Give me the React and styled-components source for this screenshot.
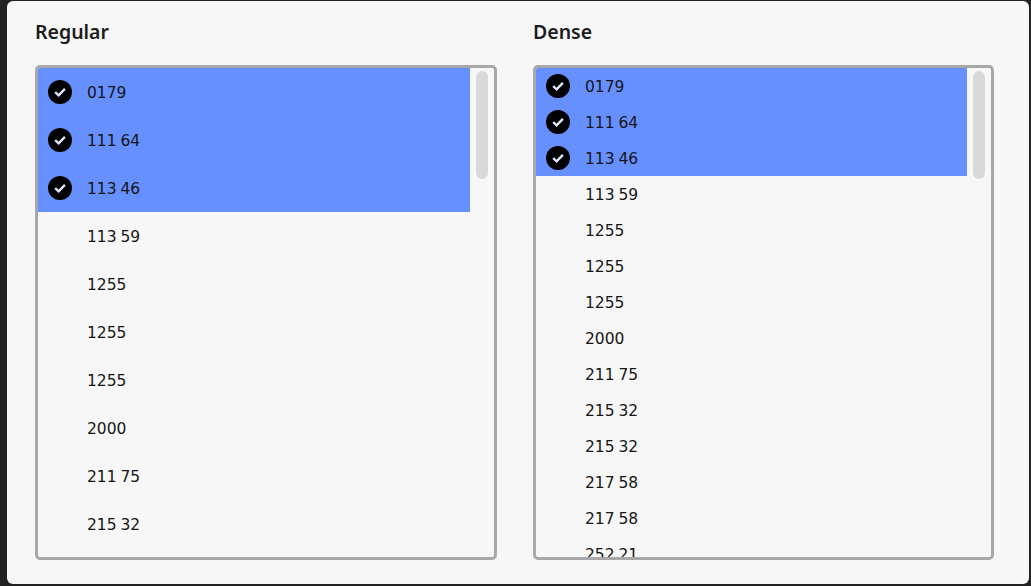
import styled, { createGlobalStyle } from "styled-components"

const GlobalStyle = createGlobalStyle`
  html, body {
    margin: 0;
    height: 100%;
    background: #222222;
    overflow: hidden;
  }
`

const regularItems = ["0179", "111 64", "113 46", "113 59", "1255", "1255", "1255", "2000", "211 75", "215 32"]
const denseItems = ["0179", "111 64", "113 46", "113 59", "1255", "1255", "1255", "2000", "211 75", "215 32", "215 32", "217 58", "217 58", "252 21"]

const CheckBadge = () => (
  <svg width="24" height="24" viewBox="0 0 24 24" aria-hidden="true">
    <circle cx="12" cy="12" r="12" fill="#000" />
    <path d="M7.2 12.2l3.4 3.2 6.3-6.5" fill="none" stroke="#dfe7ff" strokeWidth="2.4" />
  </svg>
)

const SelectList = ({ title, items, rowHeight }) => (
  <Column>
    <Title>{title}</Title>
    <ListBox>
      <List>
        {items.map((item, i) => (
          <Row key={i} $height={rowHeight} $selected={i < 3}>
            <IconSlot>{i < 3 && <CheckBadge />}</IconSlot>
            <Label>{item}</Label>
          </Row>
        ))}
      </List>
      <Track>
        <Thumb />
      </Track>
    </ListBox>
  </Column>
)

const App = () => (
  <>
    <GlobalStyle />
    <Dialog>
      <SelectList title="Regular" items={regularItems} rowHeight={48} />
      <SelectList title="Dense" items={denseItems} rowHeight={36} />
    </Dialog>
  </>
)

const Dialog = styled.div`
  box-sizing: border-box;
  width: 1022px;
  height: 583px;
  margin: 1px 0 0 7px;
  padding: 18px 35px 24px 28px;
  background: #f7f7f7;
  border-radius: 6px;
  display: grid;
  grid-template-columns: 462px 461px;
  column-gap: 36px;
`

const Column = styled.section`
  display: flex;
  flex-direction: column;
  min-height: 0;
`

const Title = styled.h2`
  margin: 0 0 20px;
  height: 26px;
  line-height: 26px;
  font-family: "Noto Sans", sans-serif;
  font-size: 19.5px;
  font-weight: 600;
  color: #1c1c1c;
`

const ListBox = styled.div`
  flex: 1;
  min-height: 0;
  box-sizing: border-box;
  border: 3px solid #a8a8a8;
  border-radius: 5px;
  display: flex;
  overflow: hidden;
`

const List = styled.ul`
  flex: 1;
  margin: 0;
  padding: 0;
  list-style: none;
  overflow: hidden;
`

const Row = styled.li`
  height: ${(p) => p.$height}px;
  display: flex;
  align-items: center;
  gap: 15px;
  padding-left: 10px;
  background: ${(p) => (p.$selected ? "#668fff" : "transparent")};
`

const IconSlot = styled.span`
  width: 24px;
  height: 24px;
  flex-shrink: 0;
  display: block;
  svg { display: block; }
`

const Label = styled.span`
  padding-top: 2px;
  font-family: "DejaVu Sans", sans-serif;
  font-size: 15.5px;
  word-spacing: -1px;
  color: #161616;
`

const Track = styled.div`
  width: 24px;
  flex-shrink: 0;
  padding: 3px 6px 0 6px;
  box-sizing: border-box;
`

const Thumb = styled.div`
  height: 108px;
  border-radius: 6px;
  background: #d9d9d9;
`

export default App
